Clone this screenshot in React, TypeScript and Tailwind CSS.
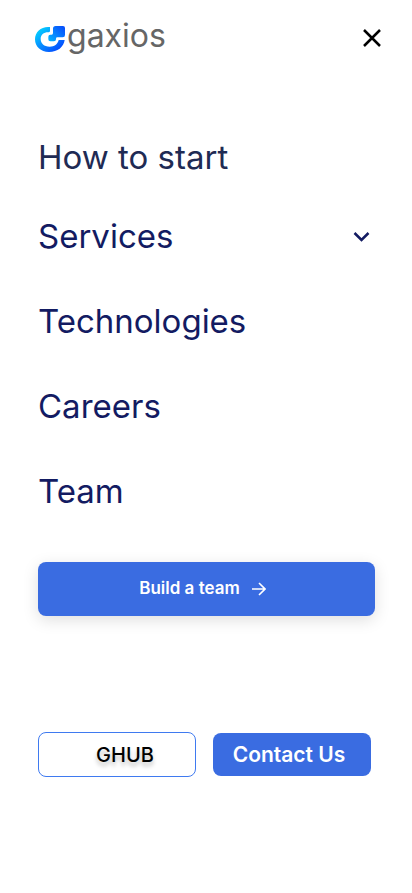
import React from "react";

function Logo() {
  return (
    <a href="#" aria-label="gaxios home" className="flex items-start gap-0.5">
      <svg viewBox="0 0 90 78" className="mt-2 h-[26px] w-[30px]" aria-hidden="true">
        <defs>
          <linearGradient id="ring" x1="0" y1="0.2" x2="0.8" y2="1">
            <stop offset="0" stopColor="#04d0ff" />
            <stop offset="0.5" stopColor="#0788ff" />
            <stop offset="1" stopColor="#0345ff" />
          </linearGradient>
          <linearGradient id="mark" x1="0" y1="1" x2="1" y2="0">
            <stop offset="0" stopColor="#04b8ff" />
            <stop offset="0.5" stopColor="#087cff" />
            <stop offset="1" stopColor="#0648fa" />
          </linearGradient>
        </defs>
        <path
          d="M45 3H39C17 3 0 19 0 40C0 62 17 78 42 78C68 78 86 63 89 42H71C68 55 58 62 44 62C27 62 17 52 17 39C17 27 26 19 39 19C43 19 45 17 45 14Z"
          fill="url(#ring)"
        />
        <path
          d="M62 0H84Q90 0 90 6V27Q90 34 83 34H67Q63 34 63 38V40Q63 46 57 46H46Q40 46 40 40V32Q40 26 46 26H50Q54 26 54 21V8Q54 0 62 0Z"
          fill="url(#mark)"
        />
      </svg>
      <span className="text-[32px] leading-9 text-[#666666]">gaxios</span>
    </a>
  );
}

const links = ["Technologies", "Careers", "Team"];

export default function App() {
  return (
    <div className="min-h-screen bg-white font-['Inter',sans-serif] text-[#131b62]">
      <header className="flex h-[76px] items-start justify-between pl-[35px] pr-7 pt-[18px]">
        <Logo />
        <button type="button" aria-label="Close menu" className="mt-2 text-black">
          <svg viewBox="0 0 24 24" className="size-6" fill="none" stroke="currentColor" strokeWidth="2.5" aria-hidden="true">
            <path d="M4 4L20 20M20 4L4 20" />
          </svg>
        </button>
      </header>

      <nav className="px-[38px] pt-[42px] text-[33px] leading-[79px]">
        <a href="#" className="block text-[#1f2b54]">How to start</a>
        <button type="button" className="flex w-full items-center justify-between pr-1">
          <span>Services</span>
          <svg viewBox="0 0 18 18" className="size-[18px]" fill="none" stroke="currentColor" strokeWidth="2.5" aria-hidden="true">
            <path d="M2.5 5L9.5 12L16.5 5" />
          </svg>
        </button>
        {links.map((label) => (
          <a key={label} href="#" className="block pt-1.5">
            {label}
          </a>
        ))}
      </nav>

      <div className="pl-[38px] pr-[37px] pt-[31px]">
        <button
          type="button"
          className="flex h-[54px] w-full items-center justify-center gap-3 rounded-lg bg-[#3a6ce1] pr-2 text-[17px] font-semibold text-white shadow-[0_4px_16px_rgba(0,0,0,0.13)]"
        >
          Build a team
          <svg viewBox="0 0 14 14" className="size-3.5" fill="none" stroke="currentColor" strokeWidth="1.6" aria-hidden="true">
            <path d="M0 7H13M7 1L13 7L7 13" />
          </svg>
        </button>
      </div>

      <div className="grid grid-cols-2 items-center gap-[17px] pl-[38px] pr-[41px] pt-[116px]">
        <button
          type="button"
          className="h-[45px] rounded-lg border border-[#3f7af0] pl-4 text-xl font-medium text-black text-shadow-[0_4px_4px_rgba(0,0,0,0.25)]"
        >
          GHUB
        </button>
        <button type="button" className="h-[43px] rounded-lg bg-[#3a6ce1] pr-1.5 text-[21px] font-semibold text-white">
          Contact Us
        </button>
      </div>
    </div>
  );
}
